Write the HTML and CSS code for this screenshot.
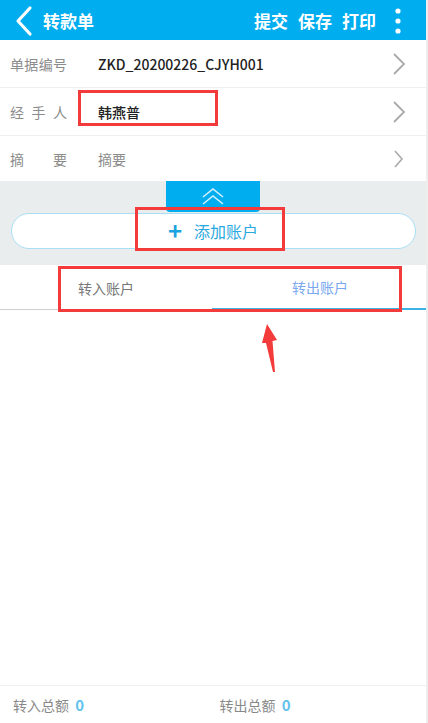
FILE: index.html
```html
<!DOCTYPE html>
<html lang="zh-CN">
<head>
    <meta charset="UTF-8">
    <meta name="viewport" content="width=device-width, initial-scale=1.0">
    <title>转款单</title>
    <link rel="stylesheet" href="styles.css">
</head>
<body>
    <div class="app">
        <div class="topbar">
            <svg class="back" width="20" height="32" viewBox="0 0 20 32">
                <polyline points="16,3 4,16 16,29" fill="none" stroke="#fff" stroke-width="3.2" stroke-linecap="round" stroke-linejoin="round"/>
            </svg>
            <span class="title">转款单</span>
            <div class="actions">
                <span>提交</span>
                <span>保存</span>
                <span>打印</span>
            </div>
            <svg class="more" width="8" height="30" viewBox="0 0 8 30">
                <circle cx="4" cy="5" r="2.6" fill="#fff"/>
                <circle cx="4" cy="15" r="2.6" fill="#fff"/>
                <circle cx="4" cy="25" r="2.6" fill="#fff"/>
            </svg>
        </div>

        <div class="form">
            <div class="row">
                <span class="label">单据编号</span>
                <span class="value">ZKD_20200226_CJYH001</span>
                <svg class="arrow" width="14" height="22" viewBox="0 0 14 22">
                    <polyline points="2,1 12,11 2,21" fill="none" stroke="#aaa" stroke-width="1.8"/>
                </svg>
            </div>
            <div class="row">
                <span class="label">经手人</span>
                <span class="value">韩燕普</span>
                <svg class="arrow" width="14" height="22" viewBox="0 0 14 22">
                    <polyline points="2,1 12,11 2,21" fill="none" stroke="#aaa" stroke-width="1.8"/>
                </svg>
            </div>
            <div class="row last">
                <span class="label">摘要</span>
                <span class="value hint">摘要</span>
                <svg class="arrow small" width="10" height="18" viewBox="0 0 10 18">
                    <polyline points="1,1 8,9 1,17" fill="none" stroke="#aaa" stroke-width="1.6"/>
                </svg>
            </div>
        </div>

        <div class="panel">
            <div class="fold">
                <svg width="28" height="18" viewBox="0 0 28 18">
                    <polyline points="4,10 14,2 24,10" fill="none" stroke="#d6f1fc" stroke-width="1.6"/>
                    <polyline points="4,17 14,9 24,17" fill="none" stroke="#d6f1fc" stroke-width="1.6"/>
                </svg>
            </div>
            <div class="add-btn">
                <span class="plus">+</span>
                <span>添加账户</span>
            </div>
        </div>

        <div class="tabs">
            <div class="tab">转入账户</div>
            <div class="tab active">转出账户</div>
        </div>

        <div class="list"></div>

        <div class="footer">
            <div class="sum">转入总额 <b>0</b></div>
            <div class="sum">转出总额 <b>0</b></div>
        </div>

        <div class="mark mark-handler"></div>
        <div class="mark mark-add"></div>
        <div class="mark mark-tabs"></div>
        <svg class="pointer" width="20" height="52" viewBox="0 0 20 52">
            <polygon points="7,0 17,16 12.5,17 15,48 13,48 6,19 2,19" fill="#f33b3b"/>
        </svg>
    </div>
</body>
</html>
```

FILE: styles.css
```css
* {
    box-sizing: border-box;
}
body {
    margin: 0;
    background: #eeeeee;
    font-family: "Noto Sans CJK SC", "Noto Sans", sans-serif;
}
.app {
    position: relative;
    width: 426px;
    height: 723px;
    background: #fff;
    display: flex;
    flex-direction: column;
}
.topbar {
    height: 40px;
    background: #00adef;
    color: #fff;
    display: flex;
    align-items: center;
    padding: 0 0 0 14px;
}
.back {
    margin-top: 1px;
}
.title {
    margin-left: 9px;
    font-size: 17px;
    font-weight: bold;
}
.actions {
    margin-left: auto;
    display: flex;
    gap: 10px;
    font-size: 17px;
    font-weight: bold;
}
.more {
    margin: 2px 24px 0 18px;
}
.form {
    background: #fff;
}
.row {
    height: 48px;
    display: flex;
    align-items: center;
    padding: 0 20px 0 10px;
    border-bottom: 1px solid #eceff0;
}
.row.last {
    height: 45px;
    border-bottom: none;
}
.label {
    width: 57px;
    font-size: 14px;
    color: #8c8c8c;
    text-align: justify;
    text-align-last: justify;
    white-space: nowrap;
}
.value {
    margin-left: 31px;
    font-size: 14px;
    font-weight: 500;
    color: #222;
}
.value.hint {
    color: #8c8c8c;
    font-weight: normal;
}
.arrow {
    margin-left: auto;
}
.arrow.small {
    margin-right: 2px;
}
.panel {
    height: 84px;
    background: #e9eded;
    display: flex;
    flex-direction: column;
    align-items: center;
}
.fold {
    width: 94px;
    height: 31px;
    background: #00adef;
    border-radius: 0 0 4px 4px;
    display: flex;
    justify-content: center;
    align-items: center;
    padding-bottom: 2px;
}
.add-btn {
    margin-top: 1px;
    width: 405px;
    height: 36px;
    background: #fff;
    border: 1px solid #a9def4;
    border-radius: 18px;
    display: flex;
    justify-content: center;
    align-items: center;
    gap: 12px;
    color: #2aa9e0;
    font-size: 16px;
}
.plus {
    font-size: 24px;
    font-weight: bold;
    line-height: 1;
    margin-top: -3px;
    color: #1aa3de;
}
.tabs {
    height: 45px;
    display: flex;
    border-bottom: 1px solid #cfcfcf;
}
.tab {
    flex: 1;
    display: flex;
    justify-content: center;
    align-items: center;
    font-size: 14px;
    color: #777;
    padding-top: 1px;
}
.tab.active {
    color: #7aa8f0;
    border-bottom: 2px solid #3bb3e6;
    margin-bottom: -1px;
    padding-left: 2px;
}
.list {
    flex: 1;
    border-bottom: 1px solid #eef1f1;
}
.footer {
    height: 37px;
    display: flex;
    align-items: center;
    padding: 0 0 0 13px;
}
.sum {
    width: 208px;
    font-size: 14px;
    color: #888;
}
.sum b {
    color: #63c3ee;
    font-size: 15px;
    margin-left: 3px;
}
.mark {
    position: absolute;
    border: 3px solid #f33b3b;
}
.mark-handler {
    left: 78px;
    top: 90px;
    width: 140px;
    height: 36px;
}
.mark-add {
    left: 135px;
    top: 207px;
    width: 150px;
    height: 44px;
}
.mark-tabs {
    left: 58px;
    top: 266px;
    width: 344px;
    height: 46px;
}
.pointer {
    position: absolute;
    left: 260px;
    top: 324px;
}
```
